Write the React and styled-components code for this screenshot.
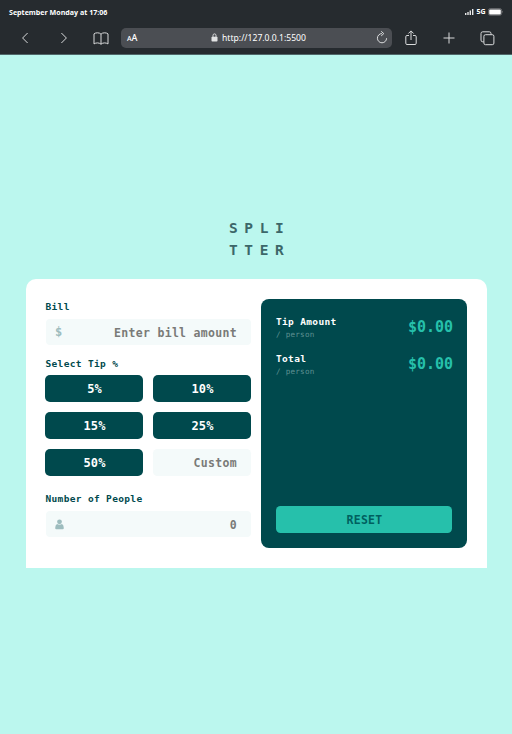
import React from "react";
import styled, { createGlobalStyle } from "styled-components";

const Global = createGlobalStyle`
  * { box-sizing: border-box; }
  body { margin: 0; background: #bbf7ee; }
  button, input { font: inherit; border: 0; margin: 0; }
`;

const Page = styled.div`
  height: 734px;
  overflow: hidden;
  background: #bbf7ee;
  font-family: "DejaVu Sans Mono", monospace;
  font-weight: 700;
  color: #00494d;
`;

/* Browser chrome */
const Browser = styled.header`
  height: 55px;
  background: #262b2f;
  border-bottom: 1px solid #50686a;
  font-family: "Open Sans", "Noto Sans", sans-serif;
  color: #fff;
`;
const StatusBar = styled.div`
  height: 24px;
  padding: 0 8px 1px 9px;
  display: flex;
  align-items: center;
  justify-content: space-between;
  font-size: 7.1px;
  line-height: 10px;
`;
const Signals = styled.div`
  display: flex;
  align-items: center;
  gap: 2.5px;
  font-size: 7px;
  svg { display: block; }
`;
const Toolbar = styled.div`
  display: flex;
  height: 28px;
  align-items: center;
  svg { display: block; fill: none; stroke: #d9dbdc; stroke-width: 1; }
`;
const Tool = styled.div`
  width: ${(p) => p.$w}px;
  display: flex;
  justify-content: ${(p) => p.$align || "center"};
`;
const Address = styled.div`
  width: 271px;
  height: 20px;
  border-radius: 5px;
  background: #4b4e53;
  display: grid;
  grid-template-columns: 32px 1fr 32px;
  align-items: center;
  padding: 0 4px 0 6px;
  margin: 0 1px 0 12px;
`;
const TextSize = styled.span`
  font-family: "Noto Sans", sans-serif;
  font-size: 9px;
  font-weight: 500;
  line-height: 20px;
  small { font-size: 7px; }
`;
const Url = styled.div`
  display: flex;
  justify-content: center;
  align-items: center;
  gap: 4px;
  font: 400 8.6px/18px "Noto Sans", sans-serif;
  letter-spacing: 0;
  padding: 0 0 2px 2px;
`;
const Reload = styled.div`
  display: flex;
  justify-content: flex-end;
  padding-bottom: 2px;
`;

/* Calculator */
const Logo = styled.h1`
  margin: 162px auto 0;
  width: 54px;
  font-size: 14.5px;
  line-height: 22px;
  letter-spacing: 6.6px;
  white-space: nowrap;
  color: #3c6769;
`;
const Card = styled.main`
  width: 461px;
  height: 289px;
  margin: 18px 0 0 26px;
  padding: 20px 20px 20px 19px;
  background: #fff;
  border-radius: 10px 10px 0 0;
  display: grid;
  grid-template-columns: 206px 206px;
  justify-content: space-between;
`;
const Form = styled.form`
  display: flex;
  flex-direction: column;
`;
const Label = styled.label`
  height: 15px;
  margin-top: ${(p) => p.$top || 0}px;
  padding-left: 0.5px;
  font-size: 9.5px;
  line-height: 15px;
  letter-spacing: 0.34px;
`;
const Field = styled.div`
  height: 26px;
  margin: 5px 0 0 1px;
  padding: 0 14px 0 9px;
  border-radius: 4px;
  background: #f4fafa;
  display: flex;
  align-items: center;
  color: #9dbcbe;
  font-size: 12px;
  svg { flex: none; }
`;
const Input = styled.input`
  min-width: 0;
  width: 100%;
  padding: 1px 0 0;
  background: transparent;
  outline: 0;
  text-align: right;
  font-size: 11.5px;
  letter-spacing: 0.31px;
  &::placeholder { color: #7a7a78; opacity: 1; }
`;
const Tips = styled.div`
  display: grid;
  grid-template-columns: 98px 98px;
  grid-auto-rows: 27px;
  gap: 10px;
  margin-top: 4px;
`;
const TipButton = styled.button`
  border-radius: 5px;
  background: #00494d;
  color: #fff;
  padding: 1px 0 0 1px;
  font-size: 12px;
  letter-spacing: 0.1px;
`;
const Custom = styled(Input)`
  border-radius: 4.5px;
  background: #f4fafa;
  padding-right: 14px;
`;
const Results = styled.section`
  background: #00494d;
  border-radius: 8px;
  padding: 15px;
  display: flex;
  flex-direction: column;
`;
const Result = styled.div`
  display: flex;
  justify-content: space-between;
  align-items: center;
  height: 27px;
  margin-bottom: 10px;
`;
const ResultName = styled.div`
  font-size: 9.5px;
  line-height: 14px;
  letter-spacing: 0.34px;
  color: #fff;
`;
const Person = styled.div`
  font-size: 7.6px;
  font-weight: 400;
  line-height: 12px;
  letter-spacing: 0.25px;
  color: #5f9092;
`;
const Amount = styled.output`
  color: #26c0ab;
  font-size: 15px;
  line-height: 22px;
  letter-spacing: -0.05px;
  padding-bottom: 2px;
  margin-right: -1px;
`;
const Reset = styled.button`
  height: 27px;
  margin-top: auto;
  border-radius: 4.5px;
  background: #26c0ab;
  color: #00605f;
  font-size: 11.5px;
  letter-spacing: 0.3px;
  padding: 1px 0 0 1px;
`;

const tips = ["5%", "10%", "15%", "25%", "50%"];
const results = ["Tip Amount", "Total"];

export default function App() {
  return (
    <Page>
      <Global />
      <Browser>
        <StatusBar>
          <span>September Monday at 17:06</span>
          <Signals>
            <svg width="9" height="6" fill="#e8e9e9">
              <path d="M0 4h1.4v2H0zM2.3 3h1.4v3H2.3zM4.6 1.6H6V6H4.6z" />
              <path d="M7 0h1.4v6H7z" />
            </svg>
            <span>5G</span>
            <svg width="16" height="8">
              <rect x=".4" y=".6" width="13.2" height="6.6" rx="1.8" fill="none" stroke="#858789" strokeWidth=".7" />
              <rect x="1.2" y="1.4" width="11.6" height="5" rx="1" fill="#fff" />
              <path d="M14.2 2.8q1.5 1.1 0 2.2z" fill="#858789" />
            </svg>
          </Signals>
        </StatusBar>
        <Toolbar>
          <Tool $w={50}><svg width="8" height="12"><path d="m6.6 1-5 5 5 5" /></svg></Tool>
          <Tool $w={27}><svg width="8" height="12"><path d="m1.4 1 5 5-5 5" /></svg></Tool>
          <Tool $w={32} $align="flex-end"><Book /></Tool>
          <Address>
            <TextSize><small>A</small>A</TextSize>
            <Url>
              <svg width="7" height="9" viewBox="0 0 7 9">
                <rect x=".5" y="3.7" width="6" height="4.8" rx=".8" fill="#e2e3e4" stroke="none" />
                <path d="M2 4V2.4a1.5 1.5 0 0 1 3 0V4" />
              </svg>
              http://127.0.0.1:5500
            </Url>
            <Reload>
              <svg width="12" height="13" viewBox="0 0 12 13">
                <path d="M6 2.6a4.6 4.6 0 1 0 4.6 4.6M5.2.3l2.6 2.3-2.6 2.3" />
              </svg>
            </Reload>
          </Address>
          <Tool $w={36}>
            <svg width="12" height="16" viewBox="0 0 12 16">
              <path d="M4 5.5H2A1.2 1.2 0 0 0 .8 6.7v6.6A1.2 1.2 0 0 0 2 14.5h8a1.2 1.2 0 0 0 1.2-1.2V6.7A1.2 1.2 0 0 0 10 5.5H8M6 10V1M3.4 3.5 6 .9l2.6 2.6" />
            </svg>
          </Tool>
          <Tool $w={40}><svg width="12" height="12"><path d="M6 .5v11M.5 6h11" /></svg></Tool>
          <Tool $w={37}>
            <svg width="15" height="15" viewBox="0 0 15 15">
              <rect x="3.9" y="3.7" width="10" height="10" rx="1.6" />
              <path d="M3.7 10.8h-1A1.7 1.7 0 0 1 1 9.1V2.5A1.7 1.7 0 0 1 2.7.8h6.6A1.7 1.7 0 0 1 11 2.5v1" />
            </svg>
          </Tool>
        </Toolbar>
      </Browser>
      <Logo>SPLI<br />TTER</Logo>
      <Card>
        <Form>
          <Label>Bill</Label>
          <Field>$<Input placeholder="Enter bill amount" aria-label="Bill" /></Field>
          <Label $top={11}>Select Tip %</Label>
          <Tips>
            {tips.map((tip) => <TipButton type="button" key={tip}>{tip}</TipButton>)}
            <Custom placeholder="Custom" aria-label="Custom tip" />
          </Tips>
          <Label $top={15}>Number of People</Label>
          <Field>
            <svg width="9" height="11" viewBox="0 0 9 11" fill="#9dbcbe">
              <circle cx="4.5" cy="2.8" r="2.4" />
              <path d="M2 5Q4.5 6.6 7 5 8.8 6 8.8 9q0 1.3-1 1.3H1.2q-1 0-1-1.3Q.2 6 2 5z" />
            </svg>
            <Input placeholder="0" aria-label="Number of people" />
          </Field>
        </Form>
        <Results>
          {results.map((name) => (
            <Result key={name}>
              <div><ResultName>{name}</ResultName><Person>/ person</Person></div>
              <Amount>$0.00</Amount>
            </Result>
          ))}
          <Reset type="button">RESET</Reset>
        </Results>
      </Card>
    </Page>
  );
}

function Book() {
  return (
    <svg width="16" height="13" viewBox="0 0 16 13">
      <path d="M8 2.2Q6.7.8 4.5.8T1 1.9v10q1.6-1 3.5-1T8 12.2q1.6-1.3 3.5-1.3t3.5 1v-10Q13.7.8 11.5.8T8 2.2zv10" />
    </svg>
  );
}
